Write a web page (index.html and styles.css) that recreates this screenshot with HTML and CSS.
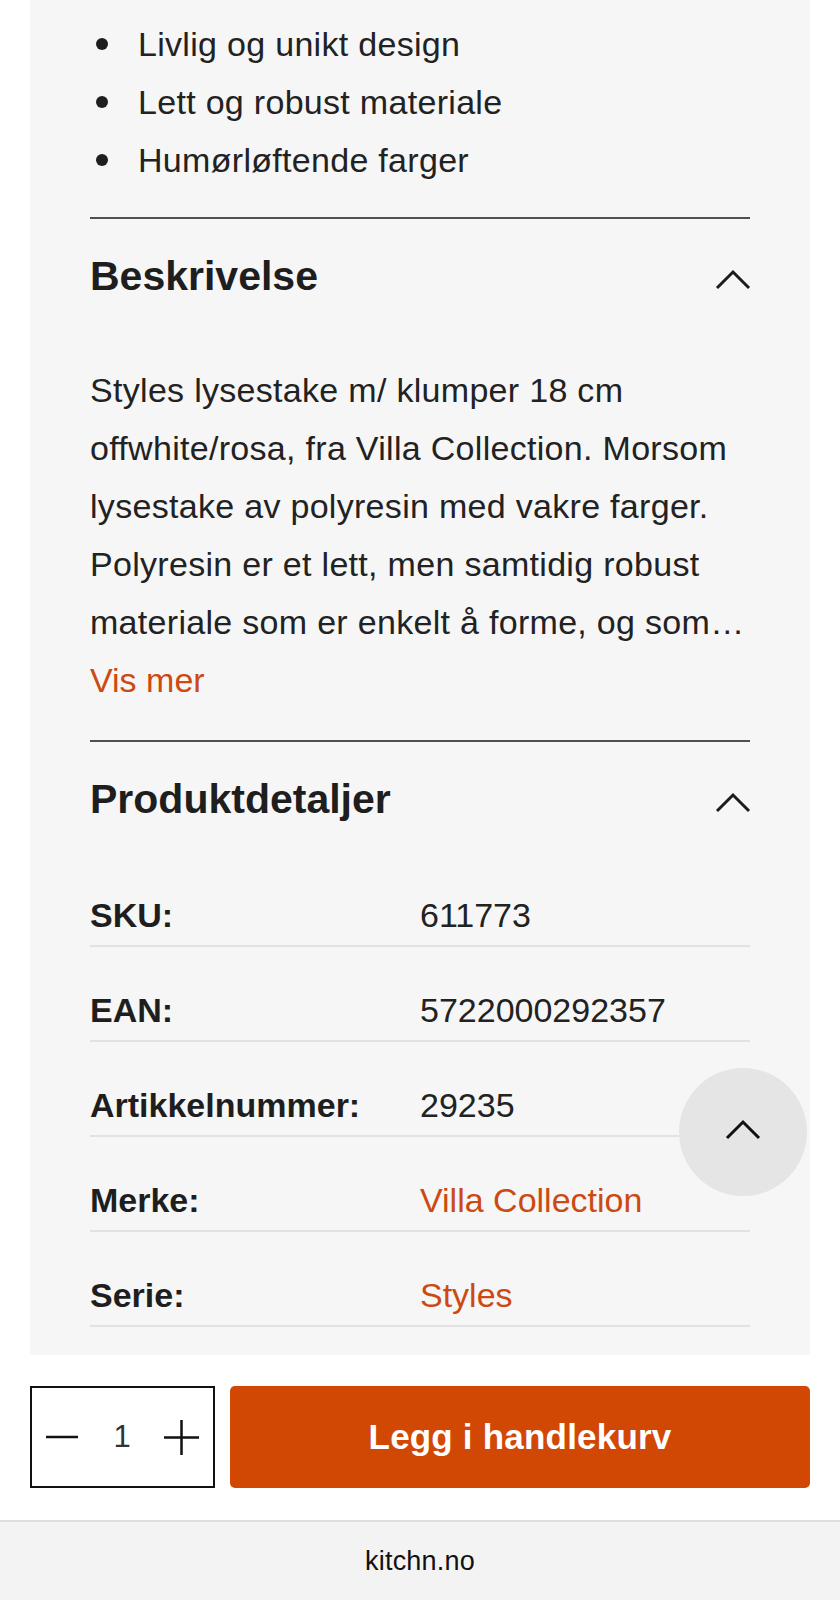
FILE: index.html
```html
<!DOCTYPE html>
<html lang="no">
<head>
<meta charset="utf-8">
<title>Styles lysestake – Kitchn</title>
<link rel="stylesheet" href="styles.css">
</head>
<body>
<main class="panel">
  <ul class="features">
    <li><span class="dot"></span>Livlig og unikt design</li>
    <li><span class="dot"></span>Lett og robust materiale</li>
    <li><span class="dot"></span>Humørløftende farger</li>
  </ul>

  <section class="section">
    <div class="section-head">
      <h2>Beskrivelse</h2>
      <svg class="chev" width="36" height="21" viewBox="0 0 36 21"><path d="M2 19 L18 3 L34 19" fill="none" stroke="#1c1c1c" stroke-width="3"/></svg>
    </div>
    <div class="desc">
      <p>Styles lysestake m/ klumper 18 cm<br>offwhite/rosa, fra Villa Collection. Morsom<br>lysestake av polyresin med vakre farger.<br>Polyresin er et lett, men samtidig robust<br>materiale som er enkelt å forme, og som…</p>
      <a class="more" href="#">Vis mer</a>
    </div>
  </section>

  <section class="section">
    <div class="section-head details-head">
      <h2>Produktdetaljer</h2>
      <svg class="chev" width="36" height="21" viewBox="0 0 36 21"><path d="M2 19 L18 3 L34 19" fill="none" stroke="#1c1c1c" stroke-width="3"/></svg>
    </div>
    <dl class="details">
      <div class="row"><dt>SKU:</dt><dd>611773</dd></div>
      <div class="row"><dt>EAN:</dt><dd>5722000292357</dd></div>
      <div class="row"><dt>Artikkelnummer:</dt><dd>29235</dd></div>
      <div class="row"><dt>Merke:</dt><dd><a href="#">Villa Collection</a></dd></div>
      <div class="row"><dt>Serie:</dt><dd><a href="#">Styles</a></dd></div>
    </dl>
  </section>
</main>

<button class="to-top" aria-label="Til toppen">
  <svg width="36" height="21" viewBox="0 0 36 21"><path d="M2 19 L18 3 L34 19" fill="none" stroke="#111" stroke-width="3"/></svg>
</button>

<div class="buybar">
  <div class="qty">
    <svg width="32" height="4" viewBox="0 0 32 4"><path d="M0 2 H32" stroke="#111" stroke-width="2.5"/></svg>
    <span class="qty-num">1</span>
    <svg width="35" height="35" viewBox="0 0 35 35"><path d="M0 17.5 H35 M17.5 0 V35" stroke="#111" stroke-width="2.5"/></svg>
  </div>
  <button class="add">Legg i handlekurv</button>
</div>

<footer class="urlbar">kitchn.no</footer>
</body>
</html>
```

FILE: styles.css
```css
html, body {
  margin: 0;
  padding: 0;
  background: #ffffff;
}
body {
  width: 840px;
  height: 1600px;
  overflow: hidden;
  font-family: "Liberation Sans", Arial, sans-serif;
  color: #222222;
}

.panel {
  margin: 0 30px;
  background: #f6f6f6;
  padding: 15px 60px 28px;
}

.features {
  list-style: none;
  margin: 0;
  padding: 0 0 28px;
}
.features li {
  display: flex;
  align-items: center;
  font-size: 34px;
  line-height: 58px;
  letter-spacing: 0.3px;
}
.dot {
  width: 12px;
  height: 12px;
  border-radius: 50%;
  background: #1e1e1e;
  margin-left: 6px;
  margin-right: 30px;
  flex: none;
}

.section {
  border-top: 2px solid #505050;
}
.section-head {
  display: flex;
  justify-content: space-between;
  align-items: center;
  padding-top: 32px;
}
.section-head h2 {
  margin: 0;
  font-size: 41px;
  line-height: 50px;
  font-weight: bold;
  letter-spacing: 0;
  color: #1e1e1e;
}
.chev {
  margin-top: 6px;
  margin-right: -1px;
}

.desc {
  padding: 60px 0 31px;
}
.desc p {
  margin: 0;
  font-size: 34px;
  line-height: 58px;
  letter-spacing: 0.3px;
  white-space: nowrap;
}
.more {
  display: block;
  font-size: 34px;
  line-height: 58px;
  color: #cc4a12;
  text-decoration: none;
}

.details-head {
  padding-bottom: 28px;
}
.details {
  margin: 0;
}
.row {
  display: grid;
  grid-template-columns: 330px 1fr;
  padding: 43px 0 10px;
  border-bottom: 2px solid #e2e2e2;
  font-size: 34px;
  line-height: 40px;
}
.row dt {
  font-weight: bold;
  letter-spacing: 0;
  color: #1e1e1e;
}
.row dd {
  margin: 0;
}
.row dd a {
  color: #cc4a12;
  text-decoration: none;
}

.to-top {
  position: fixed;
  right: 33px;
  bottom: 404px;
  width: 128px;
  height: 128px;
  border: none;
  border-radius: 50%;
  background: #e5e5e5;
  padding: 0 0 6px;
  display: flex;
  align-items: center;
  justify-content: center;
}

.buybar {
  display: flex;
  gap: 15px;
  padding: 31px 30px 32px;
  background: #ffffff;
}
.qty {
  box-sizing: border-box;
  width: 185px;
  height: 102px;
  border: 2px solid #111111;
  display: flex;
  align-items: center;
  justify-content: space-between;
  padding: 0 14px;
  background: #ffffff;
}
.qty-num {
  font-size: 31px;
  color: #333;
  padding-left: 2px;
}
.add {
  flex: 1;
  height: 102px;
  border: none;
  border-radius: 5px;
  background: #d14805;
  color: #ffffff;
  font-family: "Liberation Sans", Arial, sans-serif;
  font-size: 35px;
  font-weight: bold;
  letter-spacing: 0.2px;
}

.urlbar {
  border-top: 2px solid #dedede;
  background: #f3f3f3;
  height: 78px;
  line-height: 78px;
  text-align: center;
  font-size: 27px;
  letter-spacing: 0.2px;
  color: #111111;
}
```
